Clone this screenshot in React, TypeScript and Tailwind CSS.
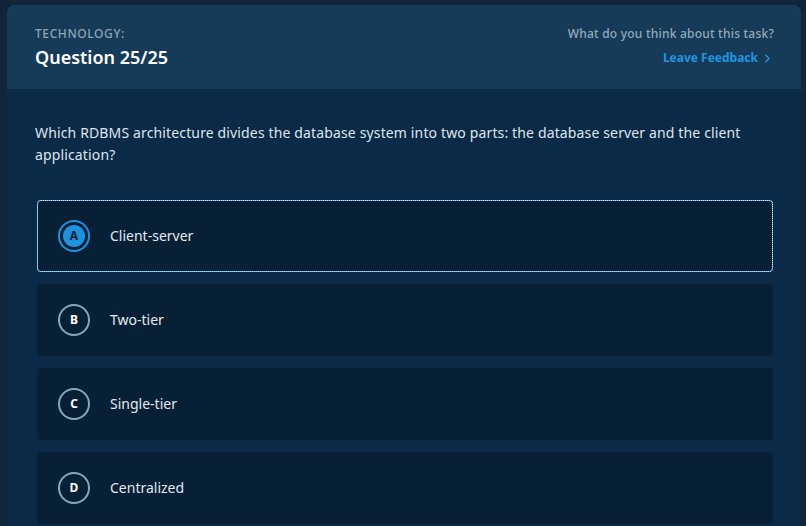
import { ChevronRight } from "lucide-react";

type Option = {
  key: string;
  label: string;
};

const options: Option[] = [
  { key: "A", label: "Client-server" },
  { key: "B", label: "Two-tier" },
  { key: "C", label: "Single-tier" },
  { key: "D", label: "Centralized" },
];

function OptionRow({ option, selected }: { option: Option; selected: boolean }) {
  return (
    <div
      className={
        selected
          ? "flex h-[72px] items-center rounded-[4px] border border-[#3aa0ea] bg-[#072036] pl-[20px] outline-1 outline-dotted outline-offset-[-1px] outline-[#d8ecfb]"
          : "flex h-[72px] items-center rounded-[4px] border border-transparent bg-[#072036] pl-[20px]"
      }
    >
      {selected ? (
        <div className="flex h-[32px] w-[32px] items-center justify-center rounded-full border-2 border-[#1d93df]">
          <div className="flex h-[22px] w-[22px] items-center justify-center rounded-full bg-[#1d93df] text-[12px] font-bold leading-none text-[#072036]">
            {option.key}
          </div>
        </div>
      ) : (
        <div className="flex h-[32px] w-[32px] items-center justify-center rounded-full border-2 border-[#8aa6b9] text-[12px] font-bold leading-none text-white">
          {option.key}
        </div>
      )}
      <span className="ml-[20px] text-[14px] leading-[20px] text-[#e3e9ee]">{option.label}</span>
    </div>
  );
}

export default function App() {
  return (
    <div
      className="min-h-screen bg-[#10243a] pl-[7px] pr-[5px] pt-[5px]"
      style={{ fontFamily: '"Noto Sans", "Open Sans", sans-serif' }}
    >
      <div className="overflow-hidden rounded-t-[8px] bg-[#0b2a47]">
        <div className="flex h-[84px] items-start justify-between bg-[#163b59] pl-[28px] pr-[27px] pt-[19px]">
          <div>
            <p className="text-[12px] font-medium leading-[20px] tracking-[0.6px] text-[#8ba5b8]">TECHNOLOGY:</p>
            <h1 className="mt-[1px] text-[18px] font-semibold leading-[24px] text-white">Question 25/25</h1>
          </div>
          <div className="flex flex-col items-end">
            <p className="text-[12px] font-medium leading-[20px] tracking-[0.22px] text-[#93aabb]">
              What do you think about this task?
            </p>
            <a href="#" className="mt-[4px] flex items-center gap-[3px] text-[12px] font-bold leading-[20px] text-[#1f95e0]">
              Leave Feedback
              <ChevronRight size={13} strokeWidth={2.5} />
            </a>
          </div>
        </div>
        <div className="pb-[20px] pl-[28px] pr-[28px] pt-[33px]">
          <p className="text-[14px] leading-[22px] tracking-[0.14px] text-[#dfe6ec]">
            Which RDBMS architecture divides the database system into two parts: the database server and the client
            application?
          </p>
          <div className="ml-[2px] mt-[34px] flex flex-col gap-[12px]">
            {options.map((o) => (
              <OptionRow key={o.key} option={o} selected={o.key === "A"} />
            ))}
          </div>
        </div>
      </div>
    </div>
  );
}
